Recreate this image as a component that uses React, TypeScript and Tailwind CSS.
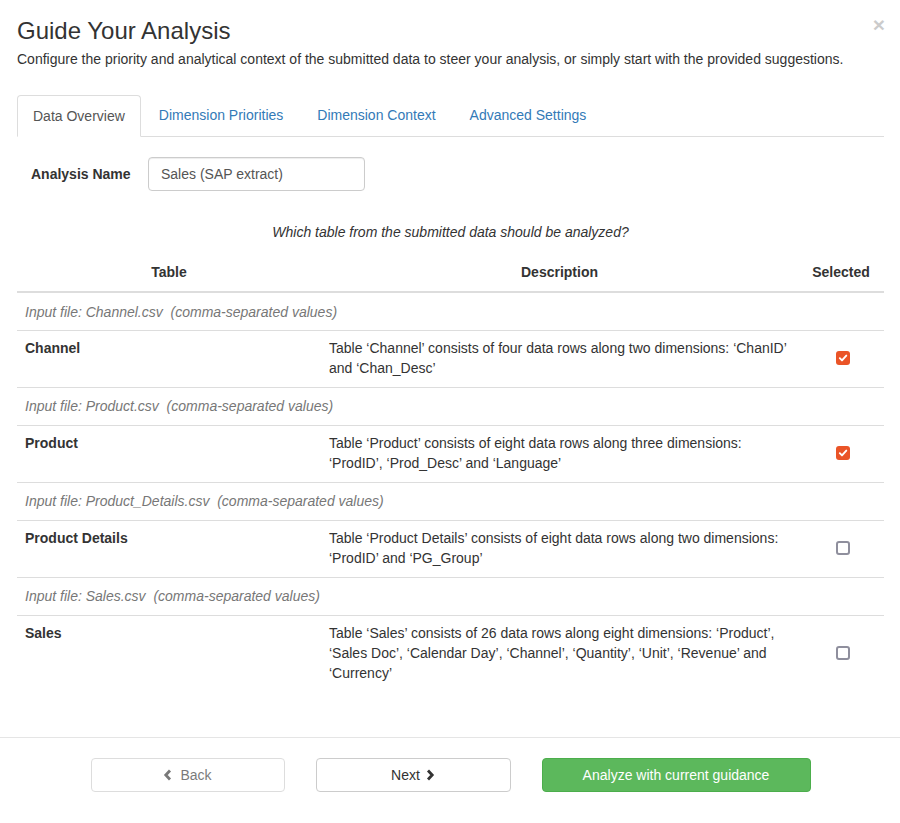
import React from "react";

const FONT = { fontFamily: '"Liberation Sans", Arial, Helvetica, sans-serif' };

function Check({ checked }: { checked: boolean }) {
  if (checked) {
    return (
      <span className="inline-flex h-[14px] w-[14px] items-center justify-center rounded-[3px] bg-[#ea5427]">
        <svg width="10" height="10" viewBox="0 0 10 10">
          <polyline points="1.8,5.2 4,7.4 8.3,2.6" fill="none" stroke="white" strokeWidth="1.9" strokeLinecap="round" strokeLinejoin="round" />
        </svg>
      </span>
    );
  }
  return <span className="inline-block h-[14px] w-[14px] rounded-[3px] border-2 border-[#8f8f9d] bg-white" />;
}

const groups = [
  {
    file: "Channel.csv",
    name: "Channel",
    desc: "Table \u2018Channel\u2019 consists of four data rows along two dimensions: \u2018ChanID\u2019 and \u2018Chan_Desc\u2019",
    checked: true,
  },
  {
    file: "Product.csv",
    name: "Product",
    desc: "Table \u2018Product\u2019 consists of eight data rows along three dimensions: \u2018ProdID\u2019, \u2018Prod_Desc\u2019 and \u2018Language\u2019",
    checked: true,
  },
  {
    file: "Product_Details.csv",
    name: "Product Details",
    desc: "Table \u2018Product Details\u2019 consists of eight data rows along two dimensions: \u2018ProdID\u2019 and \u2018PG_Group\u2019",
    checked: false,
  },
  {
    file: "Sales.csv",
    name: "Sales",
    desc: "Table \u2018Sales\u2019 consists of 26 data rows along eight dimensions: \u2018Product\u2019, \u2018Sales Doc\u2019, \u2018Calendar Day\u2019, \u2018Channel\u2019, \u2018Quantity\u2019, \u2018Unit\u2019, \u2018Revenue\u2019 and \u2018Currency\u2019",
    checked: false,
  },
];

export default function App() {
  return (
    <div style={FONT} className="relative flex h-[823px] w-[900px] flex-col bg-white text-[14px] leading-[20px] text-[#333]">
      <button className="absolute right-[15px] top-[12px] text-[21px] font-bold leading-[26px] text-black opacity-20">×</button>
      <div className="pl-[17px] pr-[16px]">
        <h3 className="mt-[18px] text-[24px] font-normal leading-[26px] text-[#333]">Guide Your Analysis</h3>
        <p className="mt-[5px] text-[14px] leading-[20px]">
          Configure the priority and analytical context of the submitted data to steer your analysis, or simply start with the provided suggestions.
        </p>
        <div className="mt-[26px] flex h-[42px] border-b border-[#ddd]">
          <div className="mb-[-1px] h-[42px] rounded-t-[4px] border border-[#ddd] border-b-white bg-white px-[15px] py-[10px] text-[#555]">
            Data Overview
          </div>
          <div className="ml-[2px] px-[16px] py-[10px] text-[#337ab7]">Dimension Priorities</div>
          <div className="ml-[2px] px-[16px] py-[10px] text-[#337ab7]">Dimension Context</div>
          <div className="ml-[2px] px-[16px] py-[10px] text-[#337ab7]">Advanced Settings</div>
        </div>
        <div className="mt-[20px] flex items-center">
          <label className="w-[131px] pl-[14px] font-bold">Analysis Name</label>
          <div className="flex h-[34px] w-[217px] items-center rounded-[4px] border border-[#ccc] px-[12px] text-[#555] shadow-[inset_0_1px_1px_rgba(0,0,0,0.075)]">
            Sales (SAP extract)
          </div>
        </div>
        <p className="mt-[31px] text-center italic">Which table from the submitted data should be analyzed?</p>
        <div className="mt-[11px]">
          <div className="grid h-[40px] grid-cols-[304px_477px_1fr] border-b-2 border-[#ddd] font-bold">
            <div className="px-[8px] pt-[9px] text-center">Table</div>
            <div className="px-[8px] pt-[9px] text-center">Description</div>
            <div className="px-[8px] pt-[9px] text-center">Selected</div>
          </div>
          {groups.map((g, i) => (
            <React.Fragment key={g.file}>
              <div className={`px-[8px] italic text-[#777] ${i === 0 ? "h-[37px] pt-[9px]" : "h-[38px] border-t border-[#ddd] pt-[8px]"}`}>
                Input file: {g.file}&nbsp; (comma-separated values)
              </div>
              <div className="grid grid-cols-[304px_477px_1fr] border-t border-[#ddd] pb-[2px]">
                <div className="px-[8px] pb-[7px] pt-[7px] font-bold">{g.name}</div>
                <div className="px-[8px] pb-[7px] pr-[10px] pt-[7px]">{g.desc}</div>
                <div className="flex items-center justify-center pl-[3px]">
                  <Check checked={g.checked} />
                </div>
              </div>
            </React.Fragment>
          ))}
        </div>
      </div>
      <div className="mb-[31px] mt-auto flex justify-center gap-[31px] border-t border-[#e5e5e5] pl-[1px] pt-[20px]">
        <button className="flex h-[34px] w-[194px] items-center justify-center gap-[7px] rounded-[4px] border border-[#ccc] bg-white text-[#333] opacity-65">
          <svg width="10" height="12" viewBox="0 0 10 12">
            <polyline points="7,1.5 2.8,6 7,10.5" fill="none" stroke="#333" strokeWidth="2.8" strokeLinejoin="miter" />
          </svg>
          Back
        </button>
        <button className="flex h-[34px] w-[195px] items-center justify-center gap-[5px] rounded-[4px] border border-[#ccc] bg-white text-[#333]">
          Next
          <svg width="10" height="12" viewBox="0 0 10 12">
            <polyline points="3,1.5 7.2,6 3,10.5" fill="none" stroke="#333" strokeWidth="2.8" strokeLinejoin="miter" />
          </svg>
        </button>
        <button className="flex h-[34px] w-[269px] items-center justify-center rounded-[4px] border border-[#4cae4c] bg-[#5cb85c] text-white">
          Analyze with current guidance
        </button>
      </div>
    </div>
  );
}
